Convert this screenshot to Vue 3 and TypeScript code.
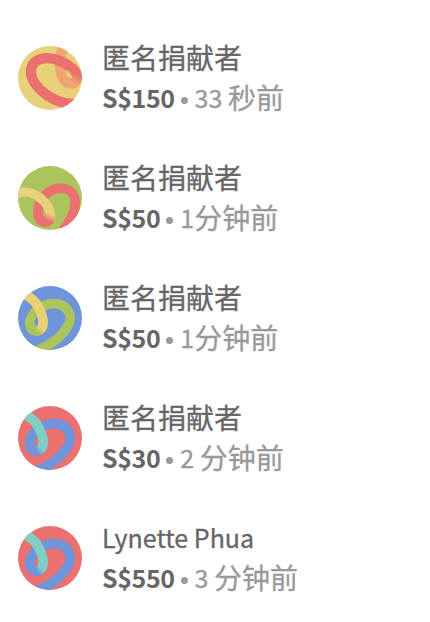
<script setup lang="ts">
interface Donation {
  name: string
  latinName?: boolean
  amount: string
  count: string
  unit: string
  art: 'sun' | 'leaf' | 'loop'
  base: string
  band: string
  accent: string
}

const donations: Donation[] = [
  { name: '匿名捐献者', amount: 'S$150', count: '33 ', unit: '秒前', art: 'sun', base: '#e9d179', band: '#ea7170', accent: '#f0a570' },
  { name: '匿名捐献者', amount: 'S$50', count: '1', unit: '分钟前', art: 'leaf', base: '#acc45c', band: '#ea7170', accent: '#e9d179' },
  { name: '匿名捐献者', amount: 'S$50', count: '1', unit: '分钟前', art: 'loop', base: '#6e94d9', band: '#acc45c', accent: '#e9d179' },
  { name: '匿名捐献者', amount: 'S$30', count: '2 ', unit: '分钟前', art: 'loop', base: '#ea7170', band: '#6e94d9', accent: '#82cec5' },
  { name: 'Lynette Phua', latinName: true, amount: 'S$550', count: '3 ', unit: '分钟前', art: 'loop', base: '#ea7170', band: '#6e94d9', accent: '#82cec5' },
]
</script>

<template>
  <ul class="list">
    <li v-for="(d, i) in donations" :key="i" class="row">
      <svg class="avatar" viewBox="24 24 192 192" fill="none" aria-hidden="true">
        <defs>
          <linearGradient :id="`fade${i}`" gradientUnits="userSpaceOnUse"
            :x1="d.art === 'sun' ? 182 : d.art === 'leaf' ? 122 : 89"
            :y1="d.art === 'sun' ? 132 : d.art === 'leaf' ? 168 : 145"
            :x2="d.art === 'sun' ? 196 : d.art === 'leaf' ? 114 : 76"
            :y2="d.art === 'sun' ? 104 : d.art === 'leaf' ? 188 : 158">
            <stop offset="0" :stop-color="d.accent" />
            <stop offset="1" :stop-color="d.band" />
          </linearGradient>
        </defs>
        <rect x="24" y="24" width="192" height="192" :fill="d.base" />
        <template v-if="d.art === 'sun'">
          <path d="M161 20C152 45 148 72 151 94C154 120 166 137 184 137" :stroke="d.accent" stroke-width="31" />
          <path d="M200 199C152 199 111 177 84 148C67 130 59 107 65 87C73 62 106 55 139 65C161 71 180 84 192 96" :stroke="d.band" stroke-width="31" />
          <path d="M184 89C197 100 203 112 201 122C198 132 192 137 182 137" :stroke="`url(#fade${i})`" stroke-width="31" />
          <path d="M168 96C179 101 186 111 182 119C173 119 166 108 168 96Z" :fill="d.base" />
        </template>
        <template v-else-if="d.art === 'leaf'">
          <path d="M155 222C181 190 199 159 195 127C191 102 172 89 149 91C119 92 91 119 85 149C81 174 88 191 104 191C116 190 121 180 121 166" :stroke="d.band" stroke-width="29" />
          <path d="M14 112C40 94 70 102 94 123C114 140 124 158 121 179Q117 197 102 192" :stroke="`url(#fade${i})`" stroke-width="28" />
        </template>
        <template v-else>
          <path d="M80 217C112 207 143 185 163 160C183 135 186 110 170 92C153 73 118 72 91 89C67 104 56 125 60 143C64 160 84 165 94 149" :stroke="d.band" stroke-width="29" />
          <path d="M38 47C58 54 76 69 87 90C100 114 102 137 96 149Q90 159 79 159" :stroke="`url(#fade${i})`" stroke-width="29" />
        </template>
      </svg>
      <div class="info">
        <div class="name"><span :class="{ latin: d.latinName }">{{ d.name }}</span></div>
        <div class="meta"><strong class="amount latin">{{ d.amount }}</strong><span class="dot"></span><span class="latin">{{ d.count }}</span><span>{{ d.unit }}</span></div>
      </div>
    </li>
  </ul>
</template>

<style>
body {
  background: #fff;
}
</style>

<style scoped>
.list {
  margin: 0;
  padding: 37px 18px 0;
  list-style: none;
  font-family: 'Noto Sans CJK SC', sans-serif;
  font-size: 28px;
  line-height: 40px;
  color: #666;
}
.row {
  display: flex;
  gap: 20px;
  height: 80px;
  margin-bottom: 40px;
}
.avatar {
  flex: none;
  width: 64px;
  height: 64px;
  margin-top: 9px;
  border-radius: 50%;
}
.info {
  white-space: pre;
  -webkit-text-stroke: 0.3px currentColor;
}
.name,
.meta {
  height: 40px;
}
.meta {
  color: #999;
}
.latin {
  font-size: 25px;
  line-height: 1;
  vertical-align: 1px;
}
.amount {
  font-weight: 700;
  letter-spacing: -0.4px;
  color: #666;
  -webkit-text-stroke: 0;
}
.dot {
  display: inline-block;
  width: 7px;
  height: 7px;
  margin: 0 7px 0 6px;
  border-radius: 50%;
  background: #999;
  vertical-align: 5px;
}
</style>
